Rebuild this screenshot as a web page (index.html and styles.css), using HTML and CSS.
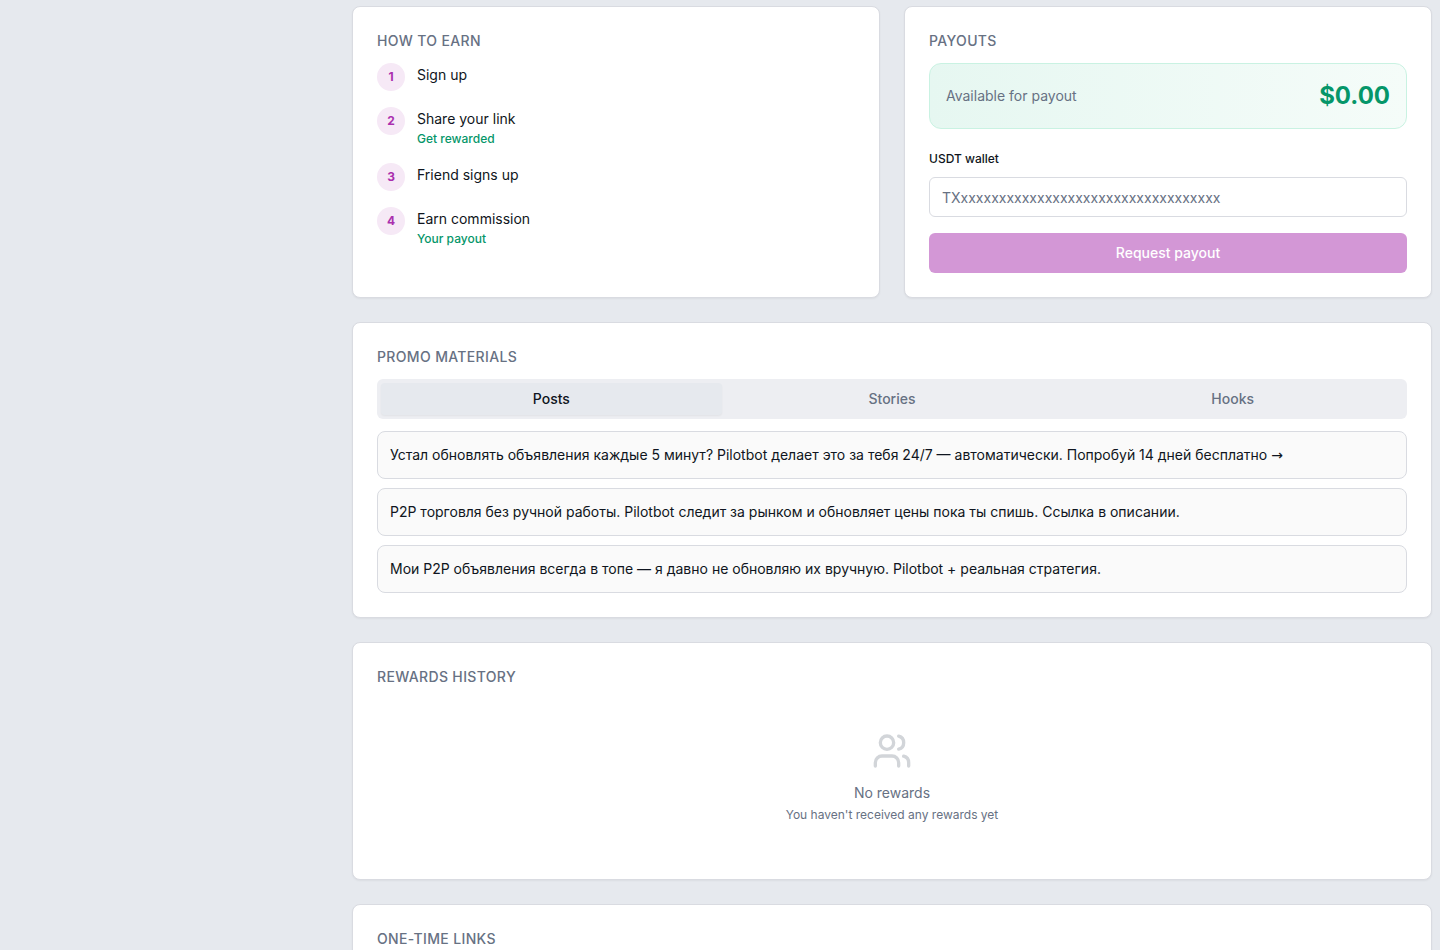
FILE: index.html
```html
<!DOCTYPE html>
<html lang="en">
<head>
  <meta charset="UTF-8" />
  <meta name="viewport" content="width=device-width, initial-scale=1.0"/>
  <title>Referral program</title>
  <link rel="stylesheet" href="styles.css">
</head>
<body>

  <main class="page">
    <div class="row">
      <section class="card">
        <h2>How to earn</h2>
        <ol class="steps">
          <li>
            <span class="num">1</span>
            <div class="step-text"><p>Sign up</p></div>
          </li>
          <li>
            <span class="num">2</span>
            <div class="step-text"><p>Share your link</p><small>Get rewarded</small></div>
          </li>
          <li>
            <span class="num">3</span>
            <div class="step-text"><p>Friend signs up</p></div>
          </li>
          <li>
            <span class="num">4</span>
            <div class="step-text"><p>Earn commission</p><small>Your payout</small></div>
          </li>
        </ol>
      </section>

      <section class="card">
        <h2>Payouts</h2>
        <div class="balance">
          <span>Available for payout</span>
          <strong>$0.00</strong>
        </div>
        <form class="payout-form">
          <label for="wallet">USDT wallet</label>
          <input type="text" id="wallet" placeholder="TXxxxxxxxxxxxxxxxxxxxxxxxxxxxxxxxxxx" />
          <button type="submit" disabled>Request payout</button>
        </form>
      </section>
    </div>

    <section class="card">
      <h2>Promo materials</h2>
      <div class="tabs" role="tablist">
        <button type="button" role="tab" class="tab active" aria-selected="true">Posts</button>
        <button type="button" role="tab" class="tab" aria-selected="false">Stories</button>
        <button type="button" role="tab" class="tab" aria-selected="false">Hooks</button>
      </div>
      <div class="posts" lang="ru">
        <p>Устал обновлять объявления каждые 5 минут? Pilotbot делает это за тебя 24/7 — автоматически. Попробуй 14 дней бесплатно <span class="arrow">→</span></p>
        <p>P2P торговля без ручной работы. Pilotbot следит за рынком и обновляет цены пока ты спишь. Ссылка в описании.</p>
        <p>Мои P2P объявления всегда в топе — я давно не обновляю их вручную. Pilotbot + реальная стратегия.</p>
      </div>
    </section>

    <section class="card">
      <h2>Rewards history</h2>
      <div class="empty">
        <svg class="empty-icon" viewBox="0 0 24 24" aria-hidden="true">
          <path d="M16 21v-2a4 4 0 0 0-4-4H6a4 4 0 0 0-4 4v2"/>
          <circle cx="9" cy="7" r="4"/>
          <path d="M22 21v-2a4 4 0 0 0-3-3.87"/>
          <path d="M16 3.13a4 4 0 0 1 0 7.75"/>
        </svg>
        <p>No rewards</p>
        <small>You haven't received any rewards yet</small>
      </div>
    </section>

    <section class="card">
      <h2>One-time links</h2>
    </section>
  </main>

</body>
</html>
```

FILE: styles.css
```css
* { box-sizing: border-box; }
body {
  margin: 0;
  font-family: Inter, sans-serif;
  font-size: 14px;
  line-height: 20px;
  background-color: #e6e9ee;
  color: #0f1520;
}
h2, p, ol { margin: 0; padding: 0; }
input, button { font: inherit; }
small {
  display: block;
  font-size: 12px;
  line-height: 16px;
}
.page {
  display: flex;
  flex-direction: column;
  gap: 24px;
  margin-left: 344px;
  padding: 6px 8px 0;
}
.row {
  display: grid;
  grid-template-columns: 1fr 1fr;
  gap: 24px;
}
.card {
  background: #fff;
  border: 1px solid #d9dbe1;
  border-radius: 8px;
  padding: 24px;
  box-shadow: 0 1px 2px rgba(0, 0, 0, 0.05);
}
.card h2 {
  margin-bottom: 12px;
  font-size: 14px;
  font-weight: 500;
  letter-spacing: 0.025em;
  text-transform: uppercase;
  color: #677183;
}

/* steps */
.steps {
  display: flex;
  flex-direction: column;
  gap: 16px;
  list-style: none;
}
.steps li {
  display: flex;
  align-items: flex-start;
  gap: 12px;
}
.num {
  display: flex;
  align-items: center;
  justify-content: center;
  width: 28px;
  height: 28px;
  border-radius: 50%;
  background: #f6e9f6;
  color: #aa2fae;
  font-size: 12px;
  font-weight: 700;
}
.step-text { padding-top: 2px; }
.step-text small {
  margin-top: 2px;
  color: #059669;
  font-weight: 500;
}

/* payouts */
.balance {
  display: flex;
  align-items: center;
  justify-content: space-between;
  padding: 16px;
  border: 1px solid #c9f2e2;
  border-radius: 12px;
  background: linear-gradient(to right, #e6f7f1, #f5fcf9);
  color: #677183;
}
.balance strong {
  font-size: 24px;
  line-height: 32px;
  font-weight: 700;
  color: #059669;
}
.payout-form {
  display: flex;
  flex-direction: column;
  margin-top: 24px;
}
.payout-form label {
  margin-bottom: 12px;
  font-size: 12px;
  line-height: 12px;
  font-weight: 500;
}
.payout-form input {
  width: 100%;
  height: 40px;
  padding: 8px 12px;
  border: 1px solid #d9dbe1;
  border-radius: 6px;
  background: #fff;
  color: inherit;
}
.payout-form input::placeholder { color: #677183; }
.payout-form button {
  height: 40px;
  margin-top: 16px;
  border: none;
  border-radius: 6px;
  background: #d397d6;
  color: #fff;
  font-weight: 500;
}

/* promo */
.tabs {
  display: grid;
  grid-template-columns: repeat(3, 1fr);
  padding: 4px;
  border-radius: 6px;
  background: #edeef2;
}
.tab {
  height: 32px;
  padding: 0 12px;
  border: none;
  border-radius: 4px;
  background: none;
  color: #677183;
  font-weight: 500;
  cursor: pointer;
}
.tab.active {
  background: #e6e9ee;
  color: #0f1520;
  box-shadow: 0 1px 2px rgba(0, 0, 0, 0.05);
}
.posts {
  display: flex;
  flex-direction: column;
  gap: 9px;
  margin-top: 12px;
}
.posts p {
  padding: 12px;
  border: 1px solid #d9dbe1;
  border-radius: 8px;
  background: #fafafa;
  line-height: 22px;
}
.arrow { font-family: "DejaVu Sans", sans-serif; }

/* empty state */
.empty {
  display: flex;
  flex-direction: column;
  align-items: center;
  padding: 32px 0;
  color: #677183;
  text-align: center;
}
.empty-icon {
  width: 40px;
  height: 40px;
  margin-bottom: 12px;
  fill: none;
  stroke: #d2d5d9;
  stroke-width: 2;
  stroke-linecap: round;
  stroke-linejoin: round;
}
.empty small { margin-top: 4px; }
```
